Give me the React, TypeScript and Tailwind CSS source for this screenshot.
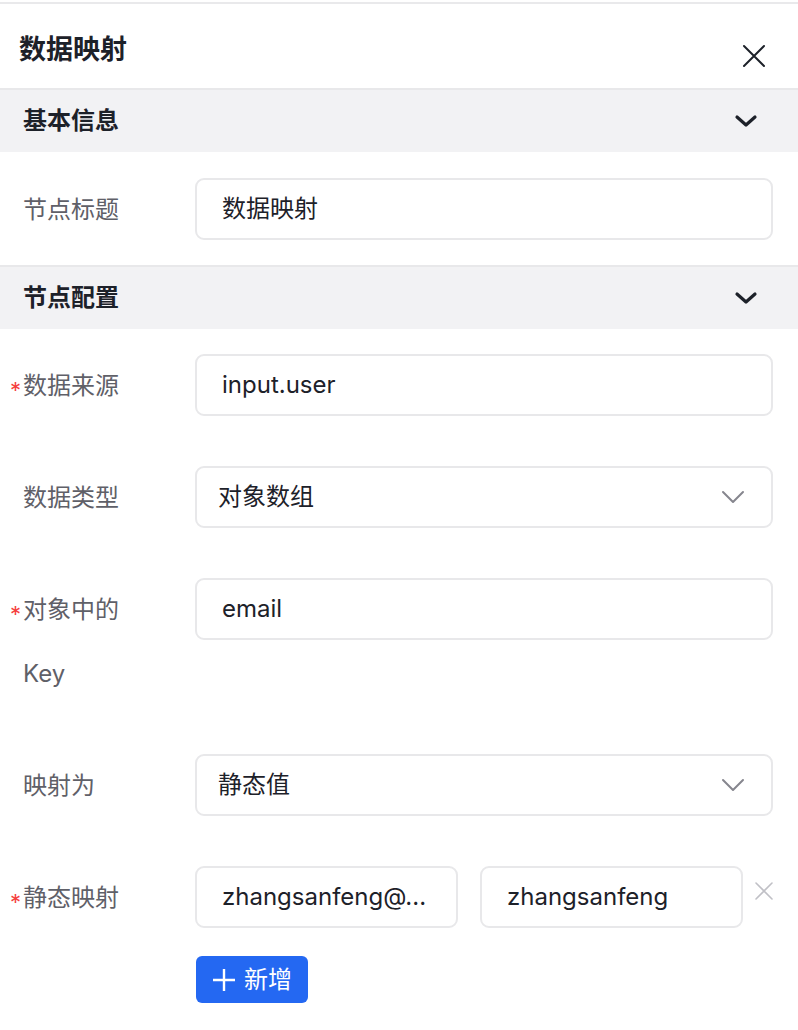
import React from "react";

const font = "font-['Inter','Noto_Sans_CJK_SC',sans-serif]";

function Chevron({ className = "" }: { className?: string }) {
  return (
    <svg width="24" height="14" viewBox="0 0 24 14" className={className} fill="none">
      <polyline points="3,3 12,11 21,3" stroke="currentColor" strokeWidth="3.2" strokeLinecap="round" strokeLinejoin="round" />
    </svg>
  );
}

function SelectArrow() {
  return (
    <svg width="24" height="14" viewBox="0 0 24 14" fill="none" className="text-[#86868e]">
      <polyline points="2,2 12,12 22,2" stroke="currentColor" strokeWidth="2" strokeLinecap="round" strokeLinejoin="round" />
    </svg>
  );
}

function SectionHeader({ title }: { title: string }) {
  return (
    <div className="flex items-center justify-between h-[64px] bg-[#f2f2f4] border-t-2 border-[#e8e8ea] pl-[23px] pr-[40px]">
      <span className="text-[24px] font-bold text-[#1d2129]">{title}</span>
      <Chevron className="text-[#1d2129]" />
    </div>
  );
}

function Label({ children, required }: { children: React.ReactNode; required?: boolean }) {
  return (
    <div className="relative w-[172px] shrink-0 text-[24px] leading-[64px] text-[#5f6068] pr-4">
      {required && (
        <span className="absolute left-[-13px] top-[4px] text-[22px] text-[#f53f3f]">*</span>
      )}
      {children}
    </div>
  );
}

function Box({ children, className = "" }: { children: React.ReactNode; className?: string }) {
  return (
    <div
      className={`h-[62px] border-2 border-[#e8e8ea] rounded-[9px] flex items-center text-[24px] text-[#1d2129] bg-white ${className}`}
    >
      {children}
    </div>
  );
}

function Row({ label, required, children, className = "" }: { label: React.ReactNode; required?: boolean; children: React.ReactNode; className?: string }) {
  return (
    <div className={`flex items-start ${className}`}>
      <Label required={required}>{label}</Label>
      <div className="flex-1 min-w-0">{children}</div>
    </div>
  );
}

export default function App() {
  return (
    <div className={`w-[798px] h-[1030px] bg-white overflow-hidden ${font}`}>
      <div className="mt-[2px] border-t-2 border-[#e9e9eb]" />
      <div className="flex items-start justify-between h-[84px] pl-[19px] pr-[32px] pt-[28px]">
        <h1 className="text-[27px] font-bold text-[#1d2129] leading-[36px]">数据映射</h1>
        <svg width="24" height="24" viewBox="0 0 24 24" className="mt-[12px] text-[#1d2129]" fill="none">
          <path d="M2 2 L22 22 M22 2 L2 22" stroke="currentColor" strokeWidth="2" strokeLinecap="round" />
        </svg>
      </div>

      <SectionHeader title="基本信息" />
      <div className="pl-[23px] pr-[25px] pt-[26px] pb-[23px]">
        <Row label="节点标题">
          <Box className="pl-[25px]">数据映射</Box>
        </Row>
      </div>

      <SectionHeader title="节点配置" />
      <div className="pl-[23px] pr-[25px] pt-[25px]">
        <Row label="数据来源" required className="mb-[48px]">
          <Box className="pl-[25px]">input.user</Box>
        </Row>
        <Row label="数据类型" className="mb-[48px]">
          <Box className="pl-[21px] pr-[26px] justify-between">
            <span>对象数组</span>
            <SelectArrow />
          </Box>
        </Row>
        <Row
          label={
            <>
              对象中的
              <br />
              Key
            </>
          }
          required
          className="mb-[48px]"
        >
          <Box className="pl-[25px]">email</Box>
        </Row>
        <Row label="映射为" className="mb-[48px]">
          <Box className="pl-[21px] pr-[26px] justify-between">
            <span>静态值</span>
            <SelectArrow />
          </Box>
        </Row>
        <Row label="静态映射" required>
          <div className="flex items-start gap-[22px]">
            <Box className="w-[263px] pl-[25px]">zhangsanfeng@...</Box>
            <Box className="w-[263px] pl-[25px]">zhangsanfeng</Box>
            <svg width="18" height="18" viewBox="0 0 18 18" className="mt-[16px] -ml-[10px] text-[#c0c0c6]" fill="none">
              <path d="M1 1 L17 17 M17 1 L1 17" stroke="currentColor" strokeWidth="1.6" strokeLinecap="round" />
            </svg>
          </div>
          <button className="mt-[28px] ml-[1px] h-[47px] w-[112px] rounded-[6px] bg-[#2468f2] text-white text-[24px] flex items-center justify-center gap-[8px]">
            <svg width="24" height="24" viewBox="0 0 24 24" fill="none">
              <path d="M12 1 V23 M1 12 H23" stroke="currentColor" strokeWidth="2.4" />
            </svg>
            <span>新增</span>
          </button>
        </Row>
      </div>
    </div>
  );
}
